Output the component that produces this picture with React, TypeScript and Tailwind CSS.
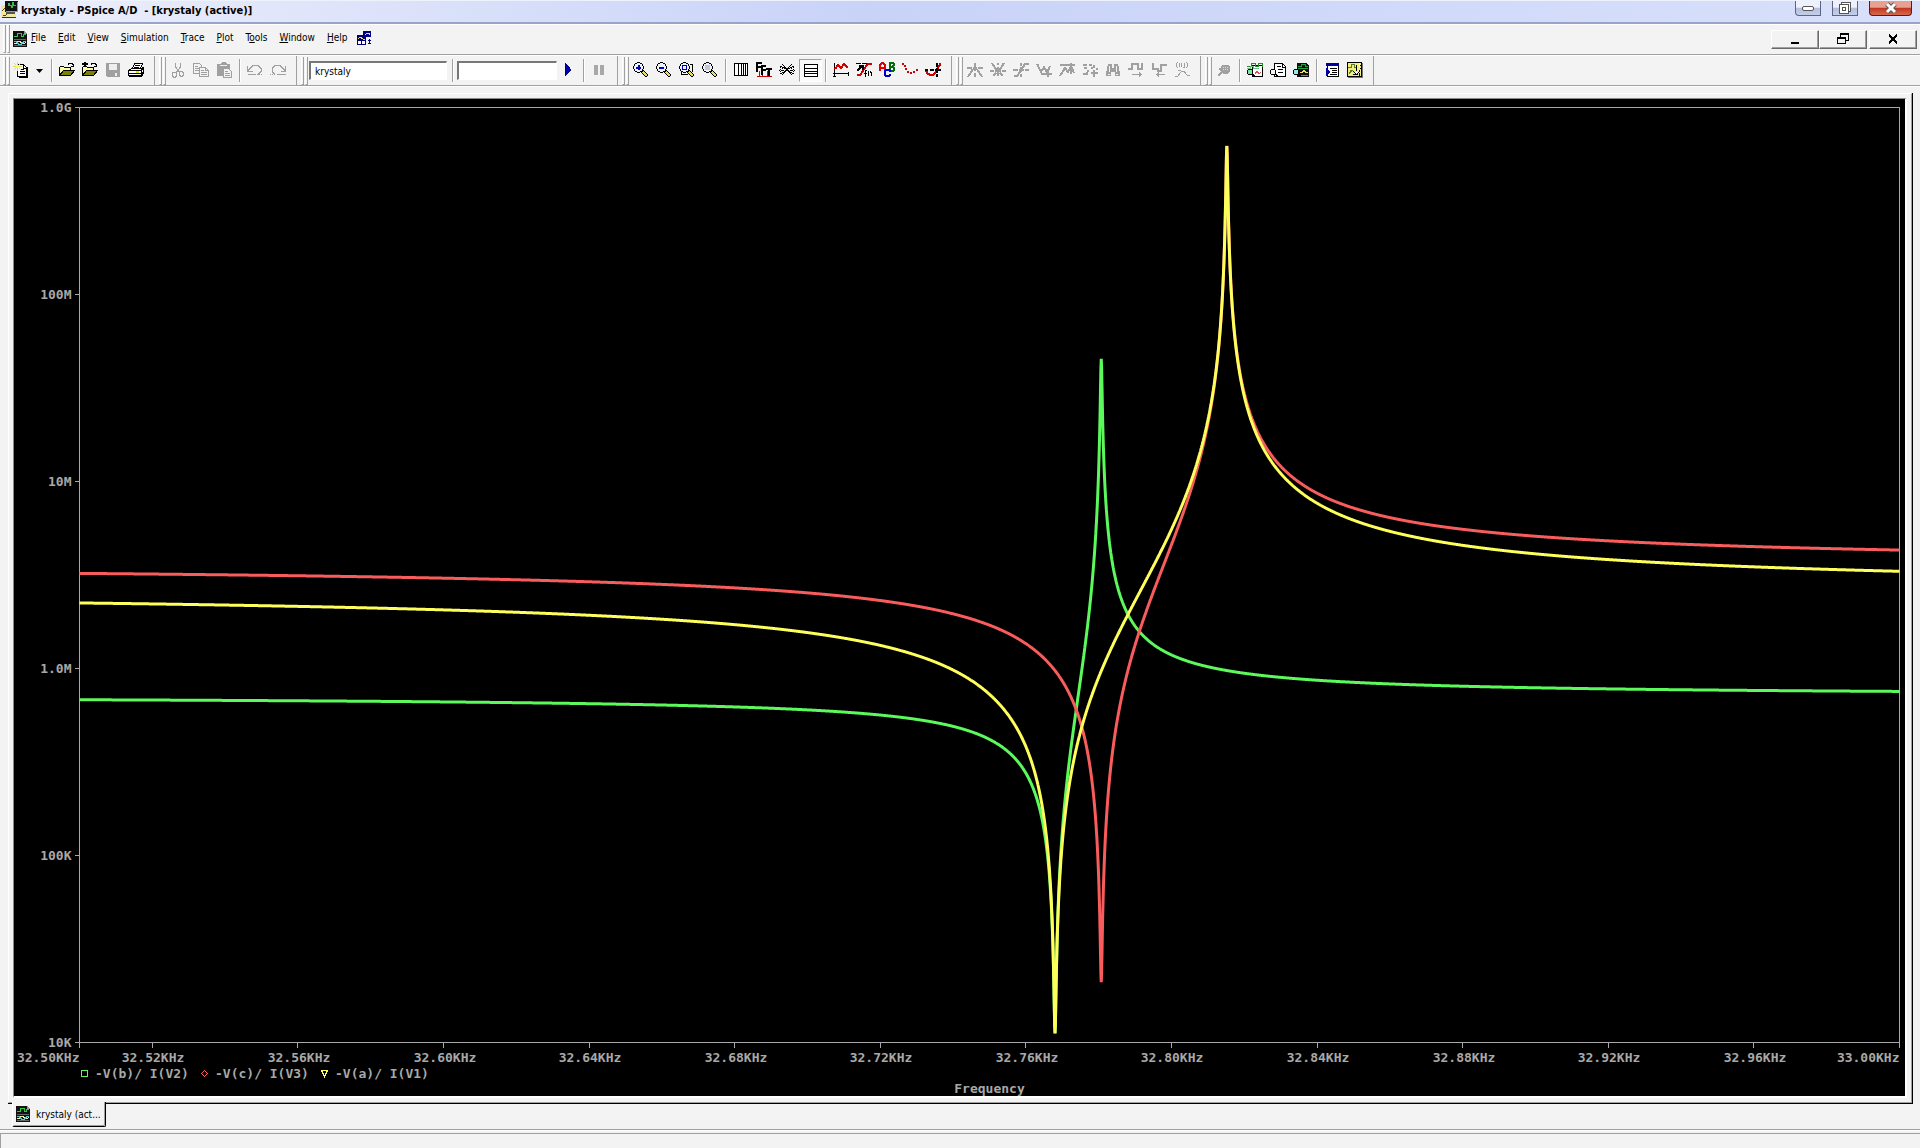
import { useEffect, useRef, useState } from "react"
import type { ReactNode } from "react"

const MIN_F = 32.5
const MAX_F = 33

// level is log10 of the impedance far from resonance, loss flattens the peak
const traces = [
  { label: "-V(b)/ I(V2)", color: "#5cf95c", series: 32.768, parallel: 32.7807, level: 5.853, loss: 0.0002 },
  { label: "-V(c)/ I(V3)", color: "#f95c5c", series: 32.7807, parallel: 32.8152, level: 6.559, loss: 0.0002 },
  { label: "-V(a)/ I(V1)", color: "#ffff5c", series: 32.768, parallel: 32.8152, level: 6.421, loss: 0.0002 },
]

const yTicks = ["1.0G", "100M", "10M", "1.0M", "100K", "10K"]
const xTicks = [32.52, 32.56, 32.6, 32.64, 32.68, 32.72, 32.76, 32.8, 32.84, 32.88, 32.92, 32.96]

function impedance(f: number, t: (typeof traces)[number]) {
  return t.level + Math.log10(Math.hypot(f - t.series, t.loss) / Math.hypot(f - t.parallel, t.loss))
}

function Chart() {
  const ref = useRef<HTMLDivElement>(null)
  const [size, setSize] = useState({ w: 1891, h: 967 })

  useEffect(() => {
    const el = ref.current
    if (!el) return
    const observer = new ResizeObserver(() => setSize({ w: el.clientWidth, h: el.clientHeight }))
    observer.observe(el)
    return () => observer.disconnect()
  }, [])

  const left = 65.5
  const top = 8.5
  const right = size.w - 5.5
  const bottom = size.h - 23.5
  const px = (f: number) => left + ((f - MIN_F) / (MAX_F - MIN_F)) * (right - left)
  const py = (v: number) => top + ((9 - v) / 5) * (bottom - top)
  const snap = (n: number) => Math.floor(n) + 0.5

  const line = (t: (typeof traces)[number]) => {
    const points = []
    for (let i = 0; i <= 5000; i++) {
      const f = MIN_F + (i * (MAX_F - MIN_F)) / 5000
      points.push(`${px(f).toFixed(2)},${py(impedance(f, t)).toFixed(2)}`)
    }
    return points.join(" ")
  }

  return (
    <div ref={ref} className="min-h-0 flex-1 overflow-hidden">
      <svg
        width={size.w}
        height={size.h}
        className="block font-['DejaVu_Sans_Mono',monospace] text-[13px] font-bold"
        role="img"
        aria-label="Impedance over frequency"
      >
        <g fill="none" stroke="#a8a8a8" shapeRendering="crispEdges">
          <rect x={left} y={top} width={right - left} height={bottom - top} />
          <path d={`M${left} ${bottom}v5M${right} ${bottom}v5`} />
          {yTicks.map((t, i) => (
            <path key={t} d={`M${left - 5} ${snap(py(9 - i))}h5`} />
          ))}
          {xTicks.map((f) => (
            <path key={f} d={`M${snap(px(f))} ${bottom}v5`} />
          ))}
        </g>
        <g fill="none" strokeWidth="3" strokeLinejoin="bevel">
          {traces.map((t) => (
            <polyline key={t.label} points={line(t)} stroke={t.color} />
          ))}
        </g>
        <g fill="#a8a8a8">
          {yTicks.map((t, i) => (
            <text key={t} x={left - 8} y={Math.round(py(9 - i)) + 4} textAnchor="end">{t}</text>
          ))}
          <text x={left} y={size.h - 4} textAnchor="end">32.50KHz</text>
          {xTicks.map((f) => (
            <text key={f} x={Math.round(px(f)) + 1} y={size.h - 4} textAnchor="middle">{f.toFixed(2)}KHz</text>
          ))}
          <text x={right} y={size.h - 4} textAnchor="end">33.00KHz</text>
        </g>
      </svg>
    </div>
  )
}

function Icon({ children, gray = false }: { children: ReactNode; gray?: boolean }) {
  return (
    <svg
      width="16"
      height="16"
      viewBox="0 0 16 16"
      fill="none"
      stroke={gray ? "#a0a0a0" : "#000"}
      shapeRendering="crispEdges"
      className="shrink-0"
      aria-hidden="true"
    >
      {children}
    </svg>
  )
}

function ProbeIcon() {
  return (
    <svg width="14" height="16" viewBox="0 0 14 16" fill="none" shapeRendering="crispEdges" aria-hidden="true">
      <path d="M0 0h11l3 3v13H0z" fill="#111" />
      <path d="M11 0l3 3h-3z" fill="#999" />
      <path d="M1 5.500h3v-3h4v3h2v-2h3" stroke="#2fc84a" />
      <path d="M1 8.500h12M1 14.500h12" stroke="#666" />
      <path d="M1 12.500h2l2-2h2l2 2h2l2-1" stroke="#f3ef9a" />
      <path d="M1 10.500h2l3 3h2l3-3h2" stroke="#5ac8d0" />
    </svg>
  )
}

function Lens({ children }: { children?: ReactNode }) {
  return (
    <Icon>
      <path d="M9.500 9.500l5 5" stroke="#000" strokeWidth="4" />
      <path d="M10 10l4 4" stroke="#e8e060" strokeWidth="2" />
      <path d="M4 1h3l3 3v3l-3 3H4L1 7V4z" fill="#eef4ff" stroke="none" />
      <path d="M4 .5h3M2 1.500h2M7 1.500h2M1.500 2v2M9.500 2v2M.5 4v3M10.500 4v3M1.500 7v2M9.500 7v2M2 9.500h2M7 9.500h2M4 10.500h3" />
      {children}
    </Icon>
  )
}

// small magnifier in the lower left of the "view file" icons
function SmallLens({ color }: { color: string }) {
  return (
    <>
      <path d="M1 8h4v4H1z" fill={color} stroke="none" />
      <path d="M1 7.500h4M.5 8v4M5.500 8v4M1 12.500h4" />
      <path d="M5 12.500h2M6 13.500h2M7 14.500h2" strokeWidth="1" />
    </>
  )
}

const icons = {
  fresh: (
    <Icon>
      <path d="M4.500 2.500h6l3 3v9h-9z" fill="#fff" />
      <path d="M10.500 3v3h3M14.500 5v10M6 15.500h9M7 7.500h4M7 9.500h5M7 11.500h5" />
      <path d="M4.500 0v9M0 4.500h9M1 1l7 7M8 1l-7 7" stroke="#e8e020" />
      <path d="M3 3h3v3H3z" fill="#ffff50" stroke="none" />
    </Icon>
  ),
  open: (
    <Icon>
      <path d="M.5 13.500v-8l1-1h3l1 1h6v3" fill="#ffffa0" />
      <path d="M.5 13.500l4-5h11l-4 5z" fill="#808000" />
      <path d="M9 2.500l1-1h3l1 1v2M12 4.500h3M14.500 2v3" />
    </Icon>
  ),
  append: (
    <Icon>
      <path d="M.5 13.500v-8l1-1h3l1 1h6v3" fill="#ffffa0" />
      <path d="M.5 13.500l4-5h11l-4 5z" fill="#808000" />
      <path d="M0 2h6M3 0v5" strokeWidth="2" />
      <path d="M9 2.500l1-1h3l1 1v2M12 4.500h3M14.500 2v3" />
    </Icon>
  ),
  save: (
    <Icon gray>
      <path d="M1 1h14v14H2l-1-1z" fill="#a0a0a0" stroke="none" />
      <path d="M4 2h8v6H4zM10 11h2v3h-2z" fill="#eee" stroke="none" />
    </Icon>
  ),
  print: (
    <Icon>
      <path d="M4.500 6.500l2-5h8l-2 5" fill="#fff" />
      <path d="M7 3.500h5M6 5.500h5" />
      <path d="M.5 8.500l3-2h10l2-1v6l-2 3h-12l-1-2z" fill="#fff" />
      <path d="M1 8.500h12v6M13 8.500l2-2M1 11.500h12M13 12.500l2-2M2 13.500h11" />
      <path d="M8 9h3v2H8z" fill="#e8e000" stroke="none" />
    </Icon>
  ),
  cut: (
    <Icon gray>
      <path d="M5.500 1v4l4 5M10.500 1v4l-4 5" />
      <path d="M6.500 10h-3l-1 1v3l1 1h2l1-1zM9.500 9h2l2 2v2l-1 1h-2l-1-1z" />
    </Icon>
  ),
  copy: (
    <Icon gray>
      <path d="M.5 1.500h6l2 2v8h-8zM2 4.500h3M2 6.500h4M2 8.500h4" />
      <path d="M6.500 5.500h6l3 3v6h-9z" fill="#f3f3f3" />
      <path d="M8 8.500h3M8 10.500h6M8 12.500h6M12.500 5v3h3" />
    </Icon>
  ),
  paste: (
    <Icon gray>
      <path d="M1 2h4l1-2h4l1 2h3v12H1z" fill="#a0a0a0" stroke="none" />
      <path d="M4 3.500h7" stroke="#eee" />
      <path d="M7.500 6.500h5l3 3v6h-8z" fill="#f3f3f3" />
      <path d="M9 9.500h3M9 11.500h5M9 13.500h5" />
    </Icon>
  ),
  undo: (
    <Icon gray>
      <path d="M.5 4v5h5M1 8.500l5-5h5l3 3v3l-3 3" />
      <path d="M1 12.500h8" />
      <path d="M10 12.500h6" strokeDasharray="1 1" />
    </Icon>
  ),
  redo: (
    <Icon gray>
      <path d="M15.500 4v5h-5M15 8.500l-5-5H5l-3 3v3l3 3" />
      <path d="M7 12.500h9" />
      <path d="M0 12.500h6" strokeDasharray="1 1" />
    </Icon>
  ),
  play: (
    <Icon>
      <path d="M5 1l6 7-6 6z" fill="#0000b0" stroke="#000080" />
    </Icon>
  ),
  pause: (
    <Icon gray>
      <path d="M3 3h4v10H3zM9 3h4v10H9z" fill="#a8a8a8" stroke="none" />
    </Icon>
  ),
  zoomIn: (
    <Lens>
      <path d="M3 5.500h5M5.500 3v5" stroke="#0000c0" strokeWidth="2" />
    </Lens>
  ),
  zoomOut: (
    <Lens>
      <path d="M3 5.500h5" stroke="#0000c0" strokeWidth="2" />
    </Lens>
  ),
  zoomArea: (
    <Lens>
      <path d="M3.500 3.500h4v4h-4z" stroke="#0000c0" />
      <path d="M11 2.500h2.500v7M2.500 10v2.500h6" />
    </Lens>
  ),
  zoomFit: (
    <Lens>
      <path d="M3 3h5v5H3z" fill="#c8c8c8" stroke="none" />
    </Lens>
  ),
  logX: (
    <Icon>
      <path d="M1.500 1.500h13v12h-13z" fill="#fff" />
      <path d="M5.500 2v12M8.500 2v12M10.500 2v12M12.500 2v12" />
    </Icon>
  ),
  fft: (
    <Icon>
      <path d="M1 14.500h15M3.500 9v6M6.500 11v4M11.500 9v6" stroke="#d00000" />
      <path d="M0 1h6M1 1v9M1 5h4M5 4h5M6 4v9M6 8h4M10 7h6M13 7v7" strokeWidth="2" />
    </Icon>
  ),
  performance: (
    <Icon>
      <path d="M1 4.500h2M3 5.500h2M5 6.500h2M7 7.500h2M9 6.500h2M11 5.500h2M13 4.500h2" />
      <path d="M1 11.500h2M3 10.500h2M5 9.500h2M7 8.500h2M9 9.500h2M11 10.500h2M13 11.500h2" />
      <path d="M3 2l10 11M13 2L3 13" />
      <path d="M1.500 5v7M3.500 6v5M14.500 5v7M12.500 6v5M0 8.500h5M11 8.500h5" strokeDasharray="1 1" />
    </Icon>
  ),
  logY: (
    <Icon>
      <path d="M1.500 1.500h13v12h-13z" fill="#fff" />
      <path d="M2 5.500h12M2 8.500h12M2 10.500h12" />
    </Icon>
  ),
  addTrace: (
    <Icon>
      <path d="M1.500 1v14M0 11.500h16M15.500 10v4M0 14.500h3" />
      <path d="M2 7l3-4 3 3 3-4 4 4" stroke="#d00000" strokeWidth="2" />
    </Icon>
  ),
  evalGoal: (
    <Icon>
      <path d="M0 1.500h16" strokeDasharray="5 1" />
      <path d="M1 13h3l3-4 3-5 2-2h4" stroke="#d00000" strokeWidth="2" />
      <path d="M1 9l5-5M3 3.500h4v4" strokeWidth="2" />
      <path d="M9.500 15V9l1-1M8 11.500h3M12.500 9v5M14 9v2M15.500 10v4" />
    </Icon>
  ),
  text: (
    <Icon>
      <path d="M1 9V3l2-2h1l2 2v6M1 6h5" stroke="#e00000" strokeWidth="2" />
      <path d="M11 1v8M10 1h4l1 1-1 3 1 1v2l-1 1h-4M11 5h4" stroke="#007000" strokeWidth="2" />
      <path d="M11 8H7L6 9v4l1 1h4M11 8v2M11 12v2" stroke="#0000d0" strokeWidth="2" />
    </Icon>
  ),
  markers: (
    <Icon>
      <path d="M0 2h2M2 4h2M3 7h2M5 10h2M8 11h2M11 10h2M14 8h2" stroke="#d00000" strokeWidth="2" />
    </Icon>
  ),
  cursor: (
    <Icon>
      <path d="M1 8l1 3 3 2h3l4-4 2-5 2-3" stroke="#d00000" strokeWidth="2" />
      <path d="M0 8h3M5 8h4M10 8h6M12 1v4M12 6v5M12 12v3" strokeWidth="2" />
    </Icon>
  ),
  peak: (
    <Icon gray>
      <path d="M0 6h5M6 6h4M11 6h5M8 1v3M8 4v5M8 11v4" strokeWidth="2" />
      <path d="M1 15l5-8M15 15l-5-8" strokeWidth="2" />
    </Icon>
  ),
  trough: (
    <Icon gray>
      <path d="M0 9h4M5 9h6M12 9h4M8 1v2M8 5v9" strokeWidth="2" />
      <path d="M2 1l5 8M14 1l-5 8M3 14l3-3M13 14l-3-3" strokeWidth="2" />
    </Icon>
  ),
  slope: (
    <Icon gray>
      <path d="M0 8h5M6 8h5M12 8h4M8 1v3M8 5v5M8 12v3" strokeWidth="2" />
      <path d="M1 14h3l3-4 3-5 2-3h4" strokeWidth="2" />
    </Icon>
  ),
  min: (
    <Icon gray>
      <path d="M1 2l4 8 3-5 4 7M5 12h11M12 7v8M14 4l-2 5" strokeWidth="2" />
      <path d="M0 2.500h3" />
    </Icon>
  ),
  max: (
    <Icon gray>
      <path d="M1 14l5-8 3 4 3-6 3 7M1 3h10M12 1v5M12 7v5M13 3h3" strokeWidth="2" />
    </Icon>
  ),
  point: (
    <Icon gray>
      <path d="M1 3h4M2 6h3M1 12h5M7 3h3M9 11h7M12 3v3M12 8v7" strokeWidth="2" />
      <path d="M5 9h2M9 6h2M14 7h2M4 11h2" strokeWidth="2" />
    </Icon>
  ),
  search: (
    <Icon gray>
      <path d="M3 2h4v4h2V2h4l2 9v3h-5v-4H6v4H1v-3z" fill="#a0a0a0" stroke="none" />
      <path d="M4.500 4v6M11.500 4v6M3 12.500h2M11 12.500h2" stroke="#f3f3f3" />
    </Icon>
  ),
  next: (
    <Icon gray>
      <path d="M0 7h4V2h6v5h5M14 1v7" strokeWidth="2" />
      <path d="M4 12.500h10M11 10v5M12.500 11v3" />
    </Icon>
  ),
  previous: (
    <Icon gray>
      <path d="M2 1v6h5v2h3V3h6" strokeWidth="2" />
      <path d="M5 12.500h9M7.500 10v5M6.500 11v3" />
    </Icon>
  ),
  label: (
    <Icon gray>
      <path d="M3.500 0l-1 2v2l1 2M12.500 0l1 2v2l-1 2M5.500 1v4M7.500 1v4M9 5v1M10.500 1v5" />
      <path d="M1 14h3l3-4 3-1 3 4h3M7 9l-3-1" />
    </Icon>
  ),
  pin: (
    <Icon gray>
      <path d="M6 3h6l2 2v4l-3 3H7L5 10V5z" fill="#a0a0a0" stroke="none" />
      <path d="M2 14l4-4M3 7l3 1" strokeWidth="2" />
      <path d="M7 5.500h5M7 7.500h5" stroke="#ddd" strokeDasharray="1 1" />
    </Icon>
  ),
  netlist: (
    <Icon>
      <path d="M5.500 3.500h10v11h-10z" fill="#fff" />
      <path d="M0 4.500h4v-3h4v3h3v-3h4v3" stroke="#209020" />
      <path d="M0 6.500h3v-2h3v2h6" stroke="#70c080" />
      <path d="M8 11.500l2-2 2 2 2-1" stroke="#d05050" />
      <SmallLens color="#80e0b0" />
    </Icon>
  ),
  output: (
    <Icon>
      <path d="M4.500 1.500h8l3 3v10h-11z" fill="#fff" />
      <path d="M7 4.500h4M8 7.500h5M8 10.500h5M12.500 2v3h3" />
      <SmallLens color="#f4f4f4" />
    </Icon>
  ),
  results: (
    <Icon>
      <path d="M4 1h9l3 3v11H4z" fill="#111" stroke="none" />
      <path d="M5 4.500h3v-2h4v2h3M5 6.500h10" stroke="#20a040" />
      <path d="M7 10.500h2l2-2 2 2h2" stroke="#f0e060" />
      <path d="M8 13.500h7" stroke="#40a0a0" />
      <SmallLens color="#90e8f0" />
    </Icon>
  ),
  queue: (
    <Icon>
      <path d="M3.500 2.500h11v12h-11z" fill="#fff" />
      <path d="M2 2.500h13" stroke="#0000a0" strokeWidth="3" />
      <path d="M6 6.500h7M8 8.500h5M8 10.500h5M6 12.500h7" />
      <path d="M2 6l4 4-4 4z" fill="#0000a0" stroke="#0000a0" />
    </Icon>
  ),
  device: (
    <Icon>
      <path d="M.5.5h14v14H.5z" fill="#f3ec80" />
      <path d="M15.500 1v15M1 15.500h15" stroke="#777" />
      <path d="M1 5.500h3v-3h3v3h2M2 11.500l3-3M3 8.500h3" stroke="#508020" />
      <path d="M9.500 3v6M6 9.500l4 3 3-4M6 12.500h4M12.500 11v3M12 3.500h2M13 6.500h1" />
      <path d="M12.500 1v4M8 10.500h3" stroke="#fff" />
    </Icon>
  ),
}

function Tool({ name, icon, gray = false, pressed = false }: { name: string; icon: ReactNode; gray?: boolean; pressed?: boolean }) {
  return (
    <button
      type="button"
      aria-label={name}
      disabled={gray}
      className={
        pressed
          ? "flex h-[23px] w-[23px] border border-t-[#a0a0a0] border-r-white border-b-white border-l-[#a0a0a0] bg-[#fafafa] pt-[3px] pl-[3px]"
          : "flex h-[23px] w-[23px] pt-[3px] pl-[3px]"
      }
    >
      {icon}
    </button>
  )
}

function Grip() {
  return (
    <div className="mr-px flex h-[28px] w-[7px] gap-px">
      <div className="flex-1 border-r border-b border-l border-r-[#a0a0a0] border-b-[#a0a0a0] border-l-white" />
      <div className="flex-1 border-r border-b border-l border-r-[#a0a0a0] border-b-[#a0a0a0] border-l-white" />
    </div>
  )
}

function Separator() {
  return (
    <div className="flex h-[23px] w-2 justify-center">
      <div className="w-0.5 border-r border-l border-r-white border-l-[#a0a0a0]" />
    </div>
  )
}

function Band({ children }: { children: ReactNode }) {
  return (
    <div className="flex h-[30px] items-center border-r border-[#a0a0a0] pr-1.5 pb-px pl-1 first:pl-[3px]">
      <Grip />
      {children}
    </div>
  )
}

const menus = ["File", "Edit", "View", "Simulation", "Trace", "Plot", "Tools", "Window", "Help"]
const underlined: Record<string, number> = { Tools: 1 }

function TitleBar() {
  return (
    <header className="flex h-6 shrink-0 items-start border-t border-b-2 border-t-[#eef2fd] border-b-[#9aa3c8] bg-linear-to-r from-[#eceffb] via-[#c9d3f8] via-45% to-[#d8e0fa] pr-2">
      <svg width="18" height="18" viewBox="0 0 18 18" shapeRendering="crispEdges" className="ml-px" aria-hidden="true">
        <path d="M0 4h12v13H0z" fill="#eee8a0" />
        <path d="M4 0h13v11H4z" fill="#111" />
        <path d="M16 1h1v10H5v-1h11z" fill="#999" />
        <path d="M7 2h2v2h2V1h2v3h2v1h-3v2h-2V5H7z" fill="#30c040" />
        <path d="M1 10l3-3M2 14h3l3-3 4 4" stroke="#604000" fill="none" />
        <path d="M5 11h9v2H5z" fill="#555" />
        <path d="M8 13h7v3H8z" fill="#eee8a0" />
        <path d="M1 16h14v1H1z" fill="#333" />
      </svg>
      <h1 className="ml-0.5 h-5 flex-1 font-['DejaVu_Sans_Condensed','DejaVu_Sans',sans-serif] text-[11px] leading-5 font-bold whitespace-pre text-black">
        krystaly - PSpice A/D  - [krystaly (active)]
      </h1>
      <div className="flex gap-[11px]">
        <button type="button" aria-label="Minimize" className="flex h-[15px] w-[26px] items-center justify-center rounded-bl border border-t-0 border-[#5c6484] bg-linear-to-b from-[#eef1fc] from-45% via-[#b3bddd] via-50% to-[#c6cfe8]">
          <span className="h-[5px] w-3 rounded-xs border border-[#555] bg-white" />
        </button>
        <button type="button" aria-label="Restore" className="flex h-[15px] w-[26px] items-center justify-center border border-t-0 border-[#5c6484] bg-linear-to-b from-[#eef1fc] from-45% via-[#b3bddd] via-50% to-[#c6cfe8]">
          <svg width="12" height="12" viewBox="0 0 12 12" fill="#fff" stroke="#555" shapeRendering="crispEdges" aria-hidden="true">
            <path d="M2.500.5h9v9h-9z" />
            <path d="M.5 2.500h9v9h-9zM3.500 5.500h3v3h-3z" />
          </svg>
        </button>
        <button type="button" aria-label="Close" className="flex h-[15px] w-[43px] items-center justify-center rounded-b border border-t-0 border-[#5a1a18] bg-linear-to-b from-[#e8a090] from-45% via-[#bf3420] via-50% to-[#d8694c]">
          <svg width="14" height="12" viewBox="0 0 14 12" fill="none" aria-hidden="true">
            <path d="M3 2l8 8M11 2l-8 8" stroke="#555" strokeWidth="5" />
            <path d="M3 2l8 8M11 2l-8 8" stroke="#fff" strokeWidth="3" />
          </svg>
        </button>
      </div>
    </header>
  )
}

function ChildButton({ name, children }: { name: string; children: ReactNode }) {
  return (
    <button
      type="button"
      aria-label={name}
      className="flex h-[19px] w-12 items-center justify-center border border-t-white border-r-[#696969] border-b-[#696969] border-l-white shadow-[inset_-1px_-1px_#a0a0a0]"
    >
      <svg width="13" height="12" viewBox="0 0 13 12" fill="none" stroke="#000" shapeRendering="crispEdges" aria-hidden="true">
        {children}
      </svg>
    </button>
  )
}

function MenuBar() {
  return (
    <div className="flex h-[31px] shrink-0 items-center border-t border-b border-t-white border-b-[#a0a0a0] pr-[3px] pb-px pl-[3px]">
      <Grip />
      <div className="ml-0.5">
        <ProbeIcon />
      </div>
      <nav className="flex flex-1 items-center pb-0.5 pl-px">
        {menus.map((menu) => {
          const at = underlined[menu] ?? 0
          return (
            <button key={menu} type="button" className="px-1.5 text-[10px] leading-4 first:pl-[3px]">
              {menu.slice(0, at)}
              <u>{menu[at]}</u>
              {menu.slice(at + 1)}
            </button>
          )
        })}
        <svg width="14" height="14" viewBox="0 0 14 14" fill="none" shapeRendering="crispEdges" className="ml-1" aria-hidden="true">
          <path d="M6 0h8v6H6zM0 4h9v10H0z" fill="#000080" />
          <path d="M8 4l2-2h2l1 2M1 8l2-2 3 2h2" stroke="#f0e060" />
          <path d="M1 10h3v3H1zM5 10h3v3H5z" fill="#fff" />
          <path d="M12.500 8v5M11 9.500h3M11 12.500h3" stroke="#000080" />
        </svg>
      </nav>
      <div className="flex">
        <ChildButton name="Minimize window">
          <path d="M2 10h8" strokeWidth="2" />
        </ChildButton>
        <ChildButton name="Restore window">
          <path d="M3.500 4V.5h8v7H9M3 1.500h9M.5 4.500h8v6h-8zM0 5.500h9" />
        </ChildButton>
        <div className="ml-0.5 flex">
          <ChildButton name="Close window">
            <path d="M2 1.500l8 9M10 1.500l-8 9" strokeWidth="2" />
          </ChildButton>
        </div>
      </div>
    </div>
  )
}

function Toolbar() {
  return (
    <div className="flex h-[31px] shrink-0 items-start border-t border-b border-t-white border-b-[#a0a0a0]">
      <Band>
        <button type="button" aria-label="New" className="flex h-[23px] w-[22px] pt-[3px] pl-0.5">
          {icons.fresh}
        </button>
        <button type="button" aria-label="New options" className="flex h-[23px] w-[15px] items-center pl-[3px]">
          <svg width="7" height="4" viewBox="0 0 7 4" aria-hidden="true">
            <path d="M0 0h7L3.500 4z" />
          </svg>
        </button>
        <Separator />
        <Tool name="Open" icon={icons.open} />
        <Tool name="Append" icon={icons.append} />
        <Tool name="Save" icon={icons.save} gray />
        <Tool name="Print" icon={icons.print} />
      </Band>
      <Band>
        <Tool name="Cut" icon={icons.cut} gray />
        <Tool name="Copy" icon={icons.copy} gray />
        <Tool name="Paste" icon={icons.paste} gray />
        <Separator />
        <Tool name="Undo" icon={icons.undo} gray />
        <Tool name="Redo" icon={icons.redo} gray />
      </Band>
      <Band>
        <input
          aria-label="Simulation profile"
          defaultValue="krystaly"
          className="mr-0.5 h-[19px] w-[138px] border border-t-2 border-l-2 border-t-[#777] border-r-white border-b-white border-l-[#777] bg-white px-1 text-[10px] outline-none"
        />
        <Separator />
        <input
          aria-label="Run to time"
          className="h-[19px] w-[100px] border border-t-2 border-l-2 border-t-[#777] border-r-white border-b-white border-l-[#777] bg-white px-1 text-[10px] outline-none"
        />
        <Tool name="Run" icon={icons.play} />
        <Separator />
        <Tool name="Pause" icon={icons.pause} gray />
      </Band>
      <Band>
        <Tool name="Zoom in" icon={icons.zoomIn} />
        <Tool name="Zoom out" icon={icons.zoomOut} />
        <Tool name="Zoom area" icon={icons.zoomArea} />
        <Tool name="Zoom fit" icon={icons.zoomFit} />
        <Separator />
        <Tool name="Log X axis" icon={icons.logX} />
        <Tool name="Fourier" icon={icons.fft} />
        <Tool name="Performance analysis" icon={icons.performance} />
        <Tool name="Log Y axis" icon={icons.logY} pressed />
        <Separator />
        <Tool name="Add trace" icon={icons.addTrace} />
        <Tool name="Evaluate goal function" icon={icons.evalGoal} />
        <Tool name="Text label" icon={icons.text} />
        <Tool name="Mark data points" icon={icons.markers} />
        <Tool name="Toggle cursor" icon={icons.cursor} />
      </Band>
      <Band>
        <Tool name="Cursor peak" icon={icons.peak} gray />
        <Tool name="Cursor trough" icon={icons.trough} gray />
        <Tool name="Cursor slope" icon={icons.slope} gray />
        <Tool name="Cursor min" icon={icons.min} gray />
        <Tool name="Cursor max" icon={icons.max} gray />
        <Tool name="Cursor point" icon={icons.point} gray />
        <Tool name="Cursor search" icon={icons.search} gray />
        <Tool name="Next transition" icon={icons.next} gray />
        <Tool name="Previous transition" icon={icons.previous} gray />
        <Tool name="Mark label" icon={icons.label} gray />
      </Band>
      <Band>
        <Tool name="Pin" icon={icons.pin} gray />
        <Separator />
        <Tool name="View netlist" icon={icons.netlist} />
        <Tool name="View output file" icon={icons.output} />
        <Tool name="View results" icon={icons.results} />
        <Separator />
        <Tool name="Simulation queue" icon={icons.queue} />
        <Tool name="Device" icon={icons.device} />
      </Band>
    </div>
  )
}

function Legend() {
  return (
    <ul className="flex h-[15px] shrink-0 items-center pl-[67px]">
      {traces.map((t, i) => (
        <li key={t.label} className="flex w-[120px] items-center gap-1.5 whitespace-pre">
          <svg width="8" height="8" viewBox="0 0 8 8" fill="none" stroke={t.color} shapeRendering="crispEdges" className="shrink-0" aria-hidden="true">
            {i === 0 && <path d="M.5.5h6v6h-6z" />}
            {i === 1 && <path d="M3.500.5l3 3-3 3-3-3z" />}
            {i === 2 && <path d="M.5.5h6l-3 6z" />}
          </svg>
          {t.label}
        </li>
      ))}
    </ul>
  )
}

export default function App() {
  return (
    <div className="flex h-screen flex-col overflow-hidden bg-[#f3f3f3] font-['DejaVu_Sans_Condensed','Liberation_Sans',sans-serif] text-[10px] text-black">
      <TitleBar />
      <MenuBar />
      <Toolbar />
      <main className="flex min-h-0 flex-1 flex-col border-t border-white pt-1.5">
        <div className="mr-[7px] ml-2 flex min-h-0 flex-1 border-r border-b border-black">
          <div className="flex min-h-0 min-w-0 flex-1 border border-t-white border-r-[#a0a0a0] border-b-[#a0a0a0] border-l-white p-1">
            <section className="flex min-h-0 min-w-0 flex-1 flex-col border-t border-r-2 border-b-2 border-l border-t-[#888] border-r-white border-b-white border-l-[#888] bg-black font-['DejaVu_Sans_Mono',monospace] text-[13px] leading-[15px] font-bold text-[#a8a8a8]">
              <Chart />
              <Legend />
              <p className="h-[15px] shrink-0 pl-[60px] text-center">Frequency</p>
            </section>
          </div>
        </div>
        <div className="-mt-0.5 ml-3 flex h-[27px] shrink-0 items-start">
          <button
            type="button"
            className="flex h-[25px] items-center gap-1.5 rounded-b-xs border-r border-b border-l border-r-black border-b-black border-l-white bg-[#f3f3f3] pr-1 pl-[3px] text-[10px] whitespace-nowrap shadow-[inset_-1px_-1px_#a0a0a0]"
          >
            <ProbeIcon />
            krystaly (act...
          </button>
        </div>
      </main>
      <footer className="flex h-[19px] shrink-0 flex-col border-t border-[#a0a0a0]">
        <div className="h-[3px] border-t border-white" />
        <div className="flex-1 border-t border-l border-[#a0a0a0]" role="status" />
      </footer>
    </div>
  )
}
